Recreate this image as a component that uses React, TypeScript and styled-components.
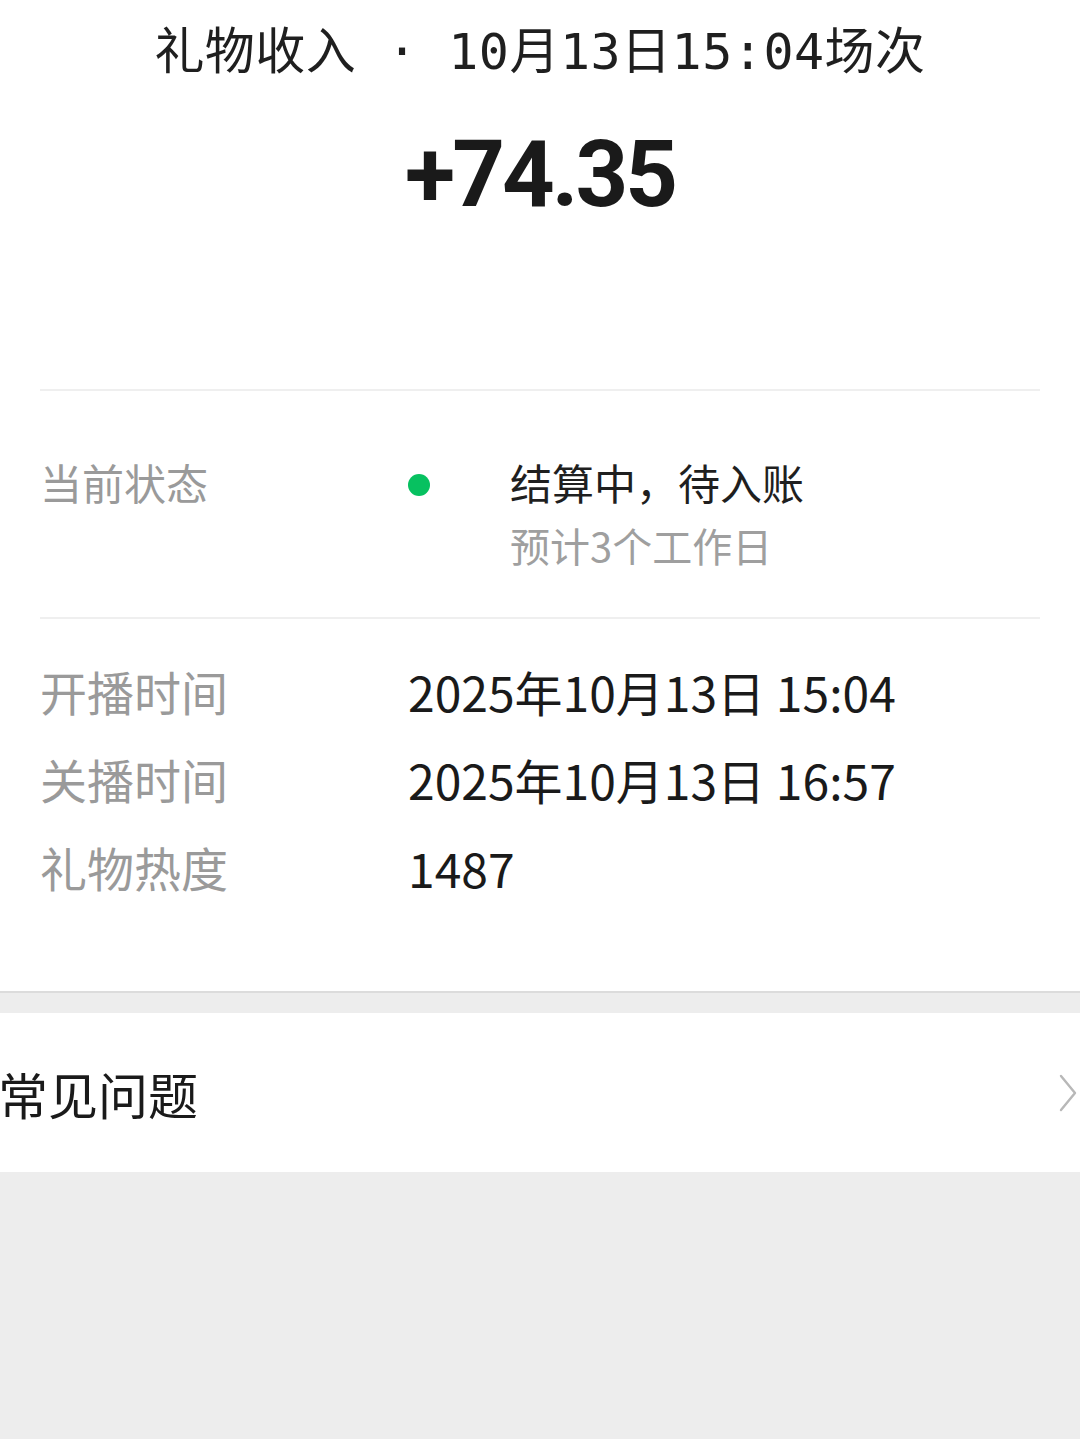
import styled, { createGlobalStyle } from 'styled-components'

const GlobalStyle = createGlobalStyle`
    html, body {
        margin: 0;
        padding: 0;
        background: #ededed;
    }
    body {
        font-family: 'Noto Sans CJK SC', 'Noto Sans', sans-serif;
        -webkit-font-smoothing: antialiased;
    }
`

const cjk = `'Noto Sans CJK SC', 'Noto Sans', sans-serif`

type Row = { label: string; value: string }

const rows: Row[] = [
    { label: '开播时间', value: '2025年10月13日 15:04' },
    { label: '关播时间', value: '2025年10月13日 16:57' },
    { label: '礼物热度', value: '1487' },
]

export default function App() {
    return (
        <Page>
            <GlobalStyle />
            <Card>
                <Header>
                    <Title>礼物收入 · 10月13日15:04场次</Title>
                    <Amount>+74.35</Amount>
                </Header>

                <Details>
                    <StatusRow>
                        <Label>当前状态</Label>
                        <StatusValue>
                            <Dot />
                            <StatusText>
                                <Main>结算中，待入账</Main>
                                <Sub>预计3个工作日</Sub>
                            </StatusText>
                        </StatusValue>
                    </StatusRow>

                    <InfoList>
                        {rows.map((r) => (
                            <InfoRow key={r.label}>
                                <Label $large>{r.label}</Label>
                                <Value>{r.value}</Value>
                            </InfoRow>
                        ))}
                    </InfoList>
                </Details>
            </Card>

            <Spacer />

            <FaqItem>
                <FaqText>常见问题</FaqText>
                <svg width="20" height="38" viewBox="0 0 20 38" fill="none">
                    <path d="M3 2 L17 19 L3 36" stroke="#b8b8b8" strokeWidth="2.4" strokeLinecap="round" strokeLinejoin="round" />
                </svg>
            </FaqItem>
        </Page>
    )
}

const Page = styled.div`
    width: 1080px;
    min-height: 1439px;
    background: #ededed;
    display: flex;
    flex-direction: column;
`

const Card = styled.div`
    background: #ffffff;
    border-bottom: 2px solid #dcdcdc;
    height: 993px;
    box-sizing: border-box;
    display: flex;
    flex-direction: column;
`

const Header = styled.div`
    display: flex;
    flex-direction: column;
    align-items: center;
    padding-top: 22px;
    height: 389px;
    box-sizing: border-box;
`

const Title = styled.div`
    font-family: 'DejaVu Sans Mono', ${cjk};
    font-size: 50px;
    line-height: 60px;
    color: #1f1f1f;
    white-space: pre;
    letter-spacing: 0.5px;
`

const Amount = styled.div`
    margin-top: 43px;
    font-family: Roboto, 'Liberation Sans', sans-serif;
    font-weight: 700;
    font-size: 92px;
    line-height: 100px;
    letter-spacing: -3px;
    color: #1a1a1a;
`

const Details = styled.div`
    margin: 0 40px;
    border-top: 2px solid #efefef;
`

const StatusRow = styled.div`
    display: flex;
    align-items: flex-start;
    padding-top: 61px;
    height: 228px;
    box-sizing: border-box;
    border-bottom: 2px solid #efefef;
`

const Label = styled.div<{ $large?: boolean }>`
    width: 368px;
    flex-shrink: 0;
    font-family: ${cjk};
    font-size: ${(p) => (p.$large ? '47px' : '42px')};
    line-height: ${(p) => (p.$large ? '88px' : '60px')};
    color: #9a9a9a;
`

const StatusValue = styled.div`
    display: flex;
    align-items: flex-start;
`

const Dot = styled.span`
    width: 22px;
    height: 22px;
    border-radius: 50%;
    background: #07c160;
    margin-top: 22px;
    flex-shrink: 0;
`

const StatusText = styled.div`
    margin-left: 80px;
    display: flex;
    flex-direction: column;
`

const Main = styled.div`
    font-family: ${cjk};
    font-size: 42px;
    line-height: 60px;
    color: #1f1f1f;
`

const Sub = styled.div`
    font-family: ${cjk};
    font-size: 40px;
    line-height: 66px;
    color: #9f9f9f;
`

const InfoList = styled.div`
    display: flex;
    flex-direction: column;
    padding-top: 28px;
`

const InfoRow = styled.div`
    display: flex;
    align-items: center;
    height: 88px;
`

const Value = styled.div`
    font-family: ${cjk};
    font-size: 48px;
    line-height: 88px;
    color: #1a1a1a;
`

const Spacer = styled.div`
    height: 20px;
`

const FaqItem = styled.div`
    background: #ffffff;
    height: 159px;
    display: flex;
    align-items: center;
    justify-content: space-between;
    padding-right: 2px;
`

const FaqText = styled.div`
    font-family: ${cjk};
    font-size: 50px;
    color: #1a1a1a;
    margin-left: -2px;
`
